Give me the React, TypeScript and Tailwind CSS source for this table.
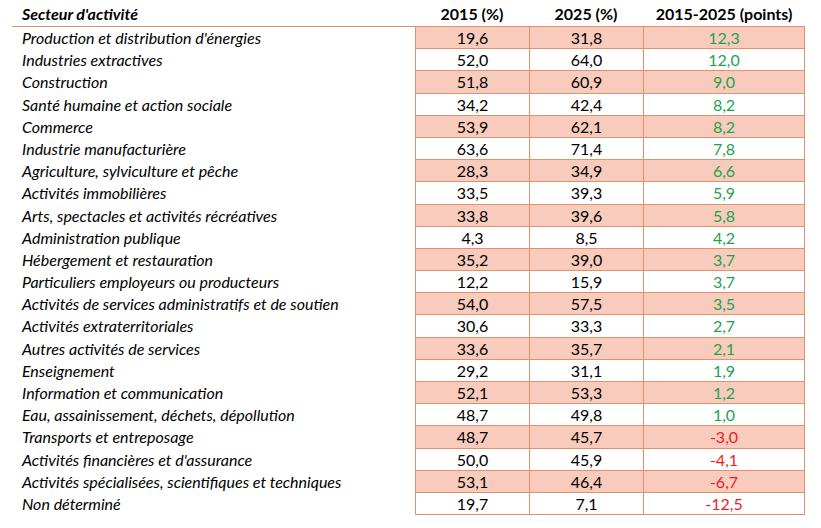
import React from "react";

type Row = [string, string, string, string];

const rows: Row[] = [
  ["Production et distribution d'énergies", "19,6", "31,8", "12,3"],
  ["Industries extractives", "52,0", "64,0", "12,0"],
  ["Construction", "51,8", "60,9", "9,0"],
  ["Santé humaine et action sociale", "34,2", "42,4", "8,2"],
  ["Commerce", "53,9", "62,1", "8,2"],
  ["Industrie manufacturière", "63,6", "71,4", "7,8"],
  ["Agriculture, sylviculture et pêche", "28,3", "34,9", "6,6"],
  ["Activités immobilières", "33,5", "39,3", "5,9"],
  ["Arts, spectacles et activités récréatives", "33,8", "39,6", "5,8"],
  ["Administration publique", "4,3", "8,5", "4,2"],
  ["Hébergement et restauration", "35,2", "39,0", "3,7"],
  ["Particuliers employeurs ou producteurs", "12,2", "15,9", "3,7"],
  ["Activités de services administratifs et de soutien", "54,0", "57,5", "3,5"],
  ["Activités extraterritoriales", "30,6", "33,3", "2,7"],
  ["Autres activités de services", "33,6", "35,7", "2,1"],
  ["Enseignement", "29,2", "31,1", "1,9"],
  ["Information et communication", "52,1", "53,3", "1,2"],
  ["Eau, assainissement, déchets, dépollution", "48,7", "49,8", "1,0"],
  ["Transports et entreposage", "48,7", "45,7", "-3,0"],
  ["Activités financières et d'assurance", "50,0", "45,9", "-4,1"],
  ["Activités spécialisées, scientifiques et techniques", "53,1", "46,4", "-6,7"],
  ["Non déterminé", "19,7", "7,1", "-12,5"],
];

export default function App() {
  return (
    <div className="w-[821px] h-[528px] bg-white pl-[12px] text-[16px] text-black [font-family:Lato,'Liberation_Sans',sans-serif]">
      <div className="w-[793px]">
        <div className="grid grid-cols-[403px_114px_114px_162px] h-[27px] pt-[2px] border-b border-[#e0926c] items-center font-bold">
          <div className="pl-[10px] italic">Secteur d'activité</div>
          <div className="text-center">2015 (%)</div>
          <div className="text-center">2025 (%)</div>
          <div className="text-center">2015-2025 (points)</div>
        </div>
        {rows.map((r, i) => {
          const fill = i % 2 === 0 ? "bg-[#f8cbbc]" : "bg-white";
          const neg = r[3].startsWith("-");
          return (
            <div key={i} className="grid grid-cols-[403px_114px_114px_162px] h-[22.2px] leading-[21px]">
              <div className="pl-[10px] italic whitespace-nowrap">{r[0]}</div>
              <div className={`${fill} text-center border-l border-b border-[#e0926c]`}>{r[1]}</div>
              <div className={`${fill} text-center border-l border-b border-[#e0926c]`}>{r[2]}</div>
              <div
                className={`${fill} text-center border-l border-r border-b border-[#e0926c] ${
                  neg ? "text-[#ee1c24]" : "text-[#1ba351]"
                }`}
              >
                {r[3]}
              </div>
            </div>
          );
        })}
      </div>
    </div>
  );
}
